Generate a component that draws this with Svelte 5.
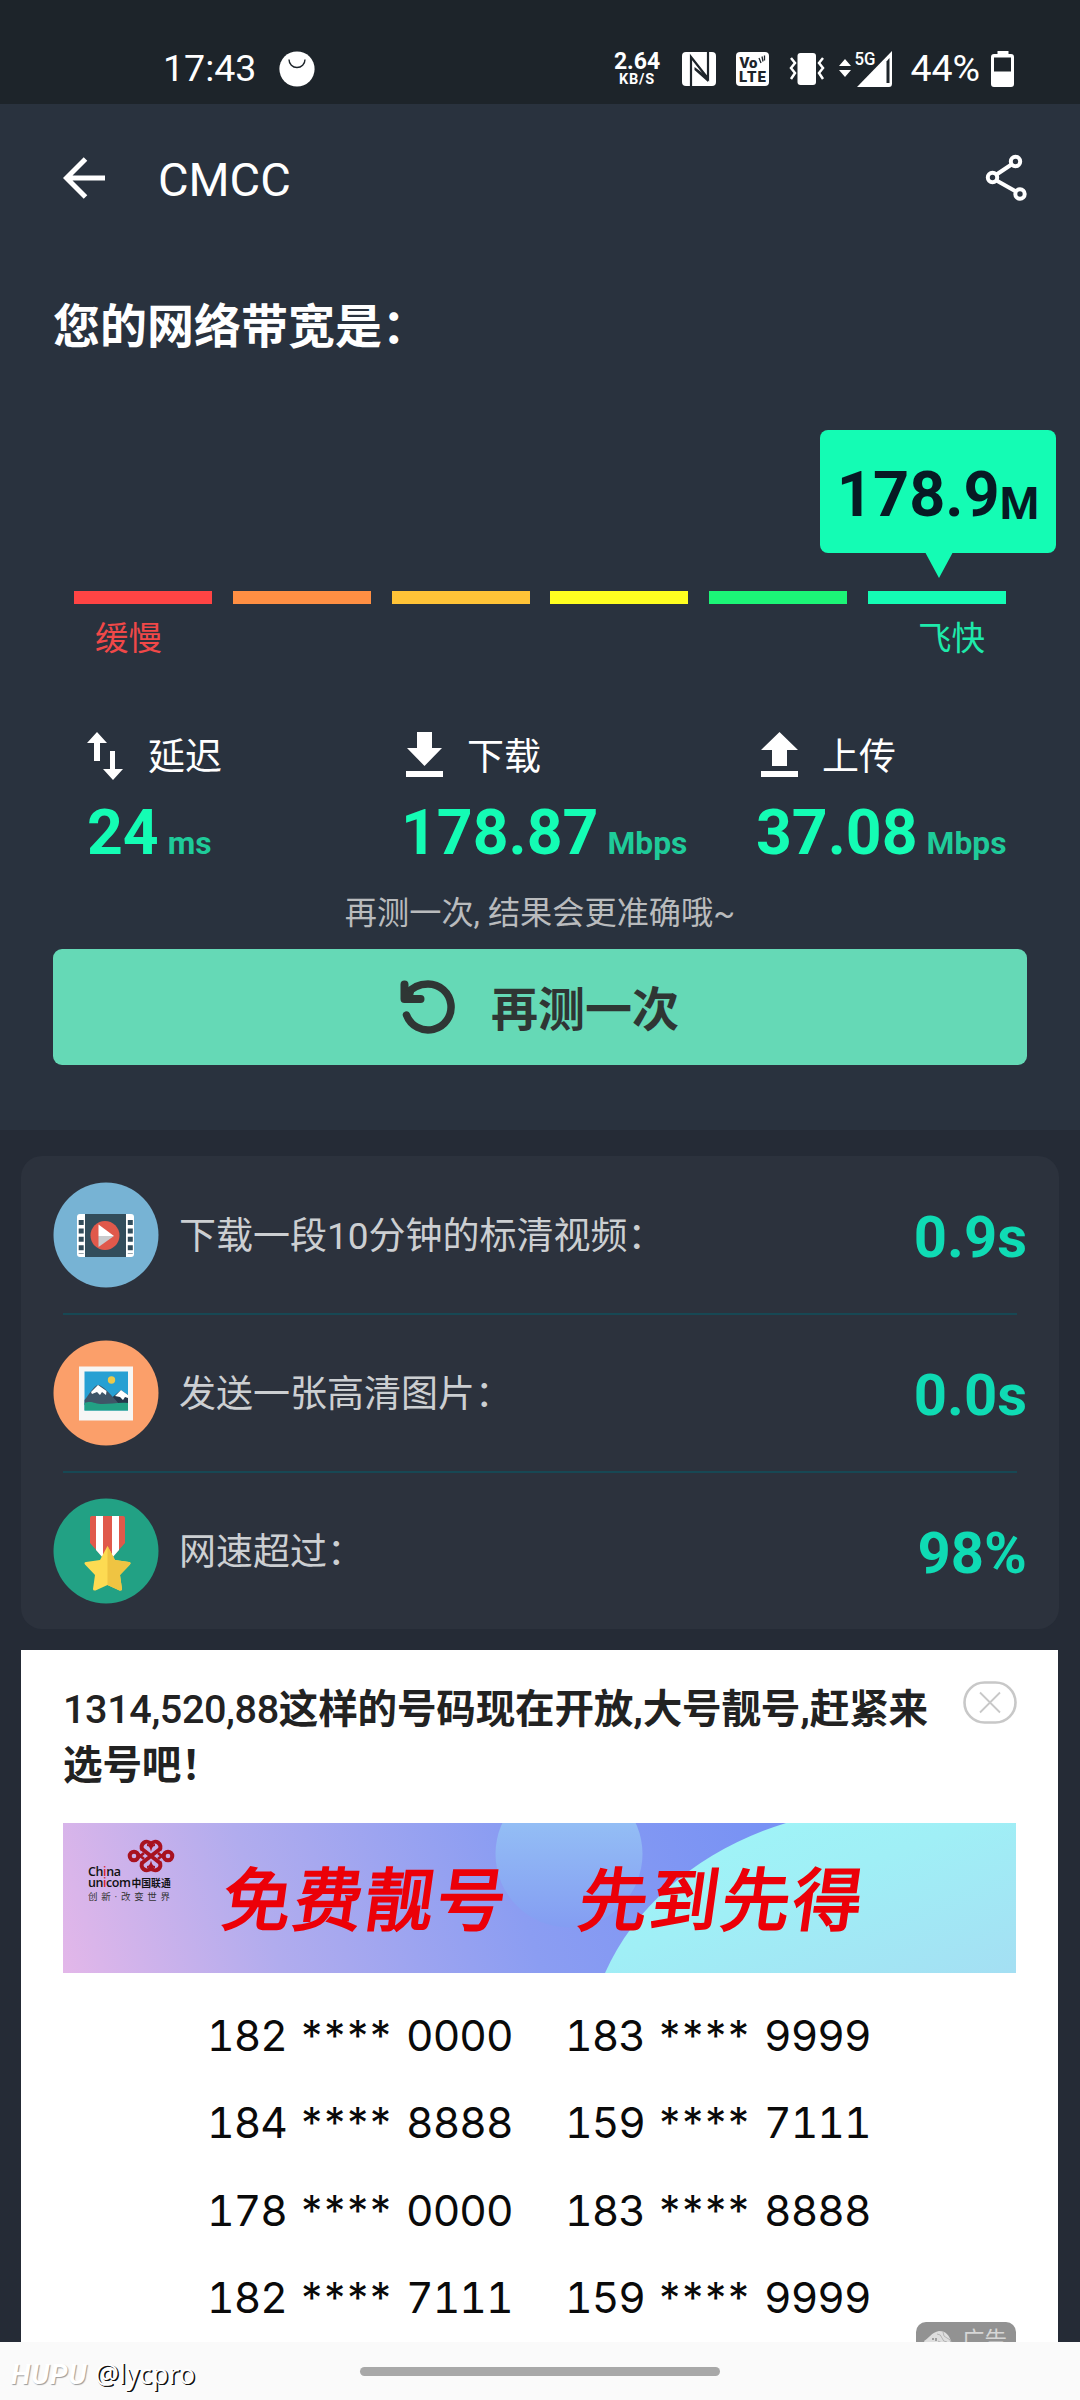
<script lang="ts">
  type Metric = { kind: 'delay' | 'down' | 'up'; label: string; value: string; unit: string }

  const levels = ['#ff4444', '#ff8f43', '#ffc337', '#ffff20', '#1cf577', '#14fcb4']

  const metrics: Metric[] = [
    { kind: 'delay', label: '延迟', value: '24', unit: 'ms' },
    { kind: 'down', label: '下载', value: '178.87', unit: 'Mbps' },
    { kind: 'up', label: '上传', value: '37.08', unit: 'Mbps' },
  ]

  const facts = [
    { icon: 'video', label: '下载一段10分钟的标清视频：', value: '0.9s' },
    { icon: 'photo', label: '发送一张高清图片：', value: '0.0s' },
    { icon: 'medal', label: '网速超过：', value: '98%' },
  ]

  const numbers = [
    ['182', '0000'], ['183', '9999'],
    ['184', '8888'], ['159', '7111'],
    ['178', '0000'], ['183', '8888'],
    ['182', '7111'], ['159', '9999'],
  ]
</script>

<div class="screen">
  <div class="status">
    <span class="clock">17:43</span>
    <svg class="app-dot" width="36" height="36" viewBox="0 0 36 36">
      <circle cx="18" cy="18" r="17.6" fill="#fff" />
      <path d="M10 8.5a8 8 0 0 0 16 0" fill="none" stroke="#1d242a" stroke-width="1.4" />
    </svg>
    <div class="rate"><b>2.64</b><small>KB/S</small></div>
    <svg class="nfc" width="34" height="34" viewBox="0 0 34 34">
      <rect width="34" height="34" rx="4" fill="#fff" />
      <path d="M9 34V5l17 21.500V0" fill="none" stroke="#1d242a" stroke-width="2.200" />
      <path d="M12.500 15v3L26 30V25" fill="#1d242a" />
    </svg>
    <svg class="volte" width="33" height="34" viewBox="0 0 33 34">
      <rect width="33" height="34" rx="4" fill="#fff" />
      <text x="3.500" y="15.500" font-size="15" textLength="18">Vo</text>
      <text x="3" y="30" font-size="17" textLength="27">LTE</text>
      <path d="m23 6 2 5M26 4.500l1 5M28.500 3.500v5" fill="none" stroke="#1d242a" stroke-width="1.300" />
    </svg>
    <svg class="vibrate" width="36" height="34" viewBox="0 0 36 34">
      <rect x="8.500" y="1" width="18.500" height="32" rx="3" fill="#fff" />
      <path d="m2 6 4 5-4 5 4 5-4 6M34 6l-4 5 4 5-4 5 4 6" fill="none" stroke="#fff" stroke-width="2.500" />
    </svg>
    <svg class="signal" width="54" height="36" viewBox="0 0 54 36">
      <path d="m0 15 6-7 6 7zM0 19h12l-6 7z" fill="#fff" />
      <path d="M53 0v32.500q0 3.500-3 3.500H18z" fill="#fff" />
      <path d="M47.500 10.500 50.500 7v25h-3z" fill="#1d242a" />
      <text x="15.500" y="14" font-size="18" textLength="21" lengthAdjust="spacingAndGlyphs">5G</text>
    </svg>
    <span class="percent">44%</span>
    <svg class="battery" width="23" height="36" viewBox="0 0 23 36">
      <path fill="#fff" d="M6.500 0h11v3H20q3 0 3 3v27q0 3-3 3H3q-3 0-3-3V6q0-3 3-3h3.500z" />
      <rect x="3" y="6.500" width="17" height="14" fill="#1d242a" />
    </svg>
  </div>

  <section class="result">
    <header class="toolbar">
      <svg width="42" height="42" viewBox="0 0 42 42">
        <path d="M22.500 2 3.500 21l19 19M3.500 21H42" fill="none" stroke="#fff" stroke-width="5" />
      </svg>
      <h1>CMCC</h1>
      <svg width="42" height="48" viewBox="0 0 42 48" fill="none" stroke="#fff" stroke-width="4">
        <circle cx="30.500" cy="7.500" r="4.700" />
        <circle cx="7.500" cy="23.500" r="4.700" />
        <circle cx="35" cy="40" r="4.700" />
        <path d="M26.500 10.500 11.500 20.500M11.500 26.500l19.500 11" />
      </svg>
    </header>

    <h2>您的网络带宽是：</h2>

    <div class="bubble"><span>178.9</span><small>M</small></div>
    <div class="levels">
      {#each levels as color}
        <i style="background: {color}"></i>
      {/each}
    </div>
    <div class="ends"><span class="slow">缓慢</span><span class="fast">飞快</span></div>

    <div class="metrics">
      {#each metrics as m}
        <div class="metric {m.kind}">
          <div class="metric-name">
            {#if m.kind === 'delay'}
              <svg width="37" height="48" viewBox="0 0 37 48" fill="#fff">
                <path d="M10 0 20 11h-7v18H7V11H0zM23 19h5v18h8L26 48 16 37h7z" />
              </svg>
            {:else if m.kind === 'down'}
              <svg width="37" height="48" viewBox="0 0 37 48" fill="#fff">
                <path d="M11 0h15v16h10L18.500 34 1 16h10zM0 39h37v6H0z" />
              </svg>
            {:else}
              <svg width="37" height="48" viewBox="0 0 37 48" fill="#fff">
                <path d="M18.500 0 37 18H26v16H11V18H0zM0 39h37v6H0z" />
              </svg>
            {/if}
            <span>{m.label}</span>
          </div>
          <div class="metric-value">{m.value}<small>{m.unit}</small></div>
        </div>
      {/each}
    </div>

    <p class="hint">再测一次, 结果会更准确哦~</p>
    <button class="again">
      <svg width="56" height="54" viewBox="0 0 56 54" fill="none" stroke="#2f3634" stroke-linecap="round">
        <path d="M7 14C13 6 20 4 28 4a23 23 0 1 1-21.500 31" stroke-width="7.500" />
        <path d="M4.500 4.500v14.500h16" stroke-width="8" stroke-linejoin="round" />
        <path d="M5 8l8 4-2 8H5z" fill="#2f3634" stroke-width="2" />
      </svg>
      <span>再测一次</span>
    </button>
  </section>

  <section class="facts">
    {#each facts as f}
      <div class="fact">
        <svg width="106" height="106" viewBox="0 0 106 106">
          {#if f.icon === 'video'}
            <circle cx="53" cy="53" r="52.500" fill="#77b3d4" />
            <rect x="24" y="32" width="57" height="43" rx="3" fill="#fff" />
            <rect x="32" y="32" width="41" height="43" fill="#324d5b" />
            <path d="M28.200 38v34M77.300 38v34" stroke="#324d5b" stroke-width="5" stroke-dasharray="5 3.400" />
            <circle cx="52" cy="53.500" r="14.500" fill="#e0594b" />
            <path d="M45.500 42.500V54H61z" fill="#fff" />
            <path d="M45.500 65V54H61z" fill="#c9cbcd" />
          {:else if f.icon === 'photo'}
            <circle cx="53" cy="53" r="52.500" fill="#fb9f6a" />
            <rect x="26" y="26.500" width="54" height="54" fill="#f6f6f5" />
            <rect x="31.500" y="31.500" width="43.500" height="39" fill="#27a0d3" />
            <circle cx="58.500" cy="40" r="3.700" fill="#ecc94b" />
            <path d="m56 60 12-10 7 5v12H60z" fill="#25374a" />
            <path d="m62 56 6-6 7 5v3l-3-1-2 3-3-3z" fill="#fff" />
            <path d="M31.500 60C36 55 41 45 45 45c4 0 12 8 21 19l-20 5-14.500-4z" fill="#3f5567" />
            <path d="m38 52 7-7 8.500 6-.5 4-4-3-2 3-3-3-5 2z" fill="#fff" />
            <path d="M31.500 63c7-3 10 1 18 1s17-2 25.500-1v7.500H31.500z" fill="#22a184" />
          {:else}
            <circle cx="53" cy="53" r="52.500" fill="#22a184" />
            <path d="M37 20q0-2 2-2h31q2 0 2 2v25L57 62h-5L37 45z" fill="#e0594b" />
            <path d="M43 18h7v42l-7-8zM59 18h7v34l-7 8z" fill="#fff" />
            <path d="m54.500 48 7.500 14 14 2q2.500.5 1 2.500L67 77l2 14q0 2-2.500 1.500L54.500 87l-12 5.500Q40 93 40 91l2-14-10-10.500Q30.500 64.500 33 64l14-2z" fill="#fddb52" />
            <path d="m54.500 48 7.500 14 14 2q2.500.5 1 2.500L67 77l2 14q0 2-2.500 1.500L54.500 87z" fill="#efc442" />
          {/if}
        </svg>
        <span class="fact-label">{f.label}</span>
        <b>{f.value}</b>
      </div>
    {/each}
  </section>

  <section class="ad">
    <div class="ad-head">
      <p><span>1314,520,88</span>这样的号码现在开放,大号靓号,赶紧来选号吧！</p>
      <svg width="54" height="44" viewBox="0 0 54 44" fill="none" stroke="#c8c8c8">
        <rect x="1.500" y="1.500" width="51" height="40" rx="20" stroke-width="2.600" />
        <path d="m17 11.500 20 20M37 11.500l-20 20" stroke-width="1.800" />
      </svg>
    </div>

    <div class="banner">
      <svg class="banner-bg" width="953" height="150" viewBox="0 0 953 150">
        <defs>
          <linearGradient id="sky" gradientUnits="userSpaceOnUse" x1="0" y1="150" x2="900" y2="-150">
            <stop offset="0" stop-color="#e3b7e9" />
            <stop offset="0.220" stop-color="#b1acee" />
            <stop offset="0.480" stop-color="#8b9df2" />
            <stop offset="0.750" stop-color="#7892f4" />
          </linearGradient>
          <linearGradient id="sea" x1="0" y1="0" x2="1" y2="1">
            <stop offset="0" stop-color="#9ff6f8" />
            <stop offset="0.450" stop-color="#a0eff6" />
            <stop offset="1" stop-color="#a4dff3" />
          </linearGradient>
          <linearGradient id="orb" x1="0" y1="0" x2="0" y2="1">
            <stop offset="0" stop-color="#93bdf5" />
            <stop offset="0.3" stop-color="#93bdf5" />
            <stop offset="1" stop-color="#849df2" />
          </linearGradient>
        </defs>
        <rect width="953" height="150" fill="url(#sky)" />
        <circle cx="506" cy="31" r="73.500" fill="url(#orb)" />
        <path d="M542 150C573 80 640 25 723 0h230v150z" fill="url(#sea)" />
      </svg>
      <svg class="unicom" width="90" height="66" viewBox="0 0 90 66">
        <g transform="translate(63 19)" fill="none" stroke="#a81220" stroke-width="4">
          <path d="M-9-7 9 7M9-7-9 7" />
          <path d="M-8.500-6a5 5 0 1 1 8.500-6 5 5 0 1 1 8.500 6M-8.500 6a5 5 0 1 0 8.500 6 5 5 0 1 0 8.500-6" />
          <path d="M-4-11q3 0 4 3 1-3 4-3M-4 11q3 0 4-3 1 3 4 3" stroke-width="2.200" />
          <circle cx="-17" cy="0" r="4.300" />
          <circle cx="17" cy="0" r="4.300" />
          <path d="m-13-2 6 5M-13 2l6-5M13-2 7 3M13 2 7-3" stroke-width="2.800" />
        </g>
        <text x="0" y="39" font-size="12.500" textLength="33">Ch<tspan fill="#d8202c">i</tspan>na</text>
        <text x="0" y="49.500" font-size="12.500" textLength="43">un<tspan fill="#d8202c">i</tspan>com</text>
        <text x="43.500" y="49.500" font-size="9.800" font-weight="700">中国联通</text>
        <text class="motto" x="0" y="62.500" font-size="9.500" textLength="82">创新·改变世界</text>
      </svg>
      <strong>免费靓号　先到先得</strong>
    </div>

    <div class="numbers">
      {#each numbers as [head, tail]}
        <div class="number"><span>{head}</span><span class="stars">****</span><span>{tail}</span></div>
      {/each}
    </div>

    <div class="tag">
      <svg width="30" height="30" viewBox="0 0 30 30">
        <path d="M1 12C5 10 9 3 16 2c8 0 11 6 13 13v15H12C10 20 3 17 1 12z" fill="#dedede" />
        <path d="M14 5q4 0 5 4t5 4M20 3q0 5 4 6t4 5M15 12q5 1 6 6" fill="none" stroke="#aaa" stroke-width="0.800" />
        <path d="M10 9v2M13 9v3" stroke="#777" stroke-width="1.200" />
      </svg>
      <span>广告</span>
    </div>
  </section>

  <footer>
    <span class="brand">HUPU</span>
    <span class="user">@lycpro</span>
    <i class="pill"></i>
  </footer>
</div>

<style>
  :global(body) { margin: 0; background: #252b36; }

  .screen {
    display: flex;
    flex-direction: column;
    width: 1080px;
    height: 2400px;
    overflow: hidden;
    background: #252b36;
    color: #fff;
    font-family: Roboto, "Noto Sans CJK SC", sans-serif;
  }
  svg { display: block; flex: none; }
  h1, h2, p { margin: 0; }

  /* status bar */
  .status {
    display: flex;
    align-items: center;
    flex: none;
    box-sizing: border-box;
    height: 104px;
    padding: 34px 66px 0 163px;
    background: #1d242a;
  }
  .clock, .percent { font-size: 37.5px; line-height: 44px; padding-bottom: 3px; }
  .clock { width: 116px; }
  .rate {
    display: flex;
    flex-direction: column;
    align-items: center;
    width: 46px;
    margin: 0 22px 0 299px;
  }
  .rate b { font-size: 23px; line-height: 21px; }
  .rate small { font-size: 14.5px; font-weight: 700; line-height: 15px; letter-spacing: 0.8px; }
  .volte { margin-left: 20px; }
  .volte text { font: 900 15px Roboto, sans-serif; fill: #1d242a; }
  .vibrate { margin-left: 20px; }
  .signal { margin-left: 14px; }
  .signal text { font-family: Roboto, sans-serif; font-weight: 500; fill: #fff; }
  .percent { margin-left: auto; }
  .battery { margin-left: 11px; }

  /* speed result */
  .result {
    flex: none;
    box-sizing: border-box;
    height: 1026px;
    padding: 0 53px;
    background: #29323e;
  }
  .toolbar { display: flex; align-items: center; height: 148px; padding-left: 10px; }
  .toolbar h1 { flex: 1; margin-left: 53px; padding-top: 4px; font-size: 47px; font-weight: 400; line-height: 60px; }
  h2 { margin-top: 45px; font-size: 47px; font-weight: 700; line-height: 60px; }

  .bubble {
    display: flex;
    align-items: baseline;
    justify-content: center;
    position: relative;
    width: 236px;
    height: 123px;
    margin: 73px -29px 0 auto;
    border-radius: 8px;
    background: #14fcb4;
    color: #071a24;
    font-weight: 700;
  }
  .bubble span { font-size: 63px; line-height: 130px; }
  .bubble small { font-size: 45px; position: relative; top: 3px; }
  .bubble::after {
    content: '';
    position: absolute;
    top: 122px;
    left: 105px;
    border: 14px solid transparent;
    border-top: 26px solid #14fcb4;
    border-bottom: 0;
  }
  .levels { display: flex; gap: 20.8px; margin: 38px 21px 0; }
  .levels i { flex: 1; height: 13px; }
  .ends { display: flex; justify-content: space-between; margin: 11px 42px 0 42px; font-size: 33.5px; line-height: 48px; }
  .slow { color: #f04848; }
  .fast { color: #1eeaab; }

  .metrics { display: flex; margin-top: 69px; padding-left: 34px; }
  .metric.delay { width: 319px; }
  .metric.down { width: 355px; }
  .metric-name { display: flex; align-items: center; gap: 24px; height: 48px; font-size: 37px; }
  .metric-name span { padding-bottom: 4px; }
  .metric-value {
    margin-top: 13px;
    margin-left: -5px;
    color: #14fcb4;
    font-size: 62.5px;
    font-weight: 700;
    line-height: 80px;
    white-space: nowrap;
  }
  .delay .metric-value { margin-left: 0; }
  .metric-value small { margin-left: 9px; font-size: 31.8px; color: #1fcb9a; }

  .hint { margin-top: 8px; text-align: center; font-size: 32.2px; line-height: 44px; color: #b9bbbd; }
  .again {
    display: flex;
    align-items: center;
    justify-content: center;
    gap: 35px;
    width: 974px;
    height: 116px;
    margin-top: 14px;
    padding: 0 1px 4px 0;
    border: 0;
    border-radius: 9px;
    background: #65d9b6;
    color: #2f3634;
    font: 700 47px Roboto, "Noto Sans CJK SC", sans-serif;
  }
  .again svg { margin-top: 3px; }

  /* what the speed means */
  .facts {
    flex: none;
    width: 1038px;
    height: 473px;
    margin: 26px auto 21px;
    border-radius: 21px;
    background: #2c323d;
  }
  .fact { display: flex; align-items: center; height: 157px; padding: 0 32px; }
  .fact + .fact {
    border-top: 1px solid transparent;
    background: linear-gradient(#174854, #174854) 42px 0 / 954px 2px no-repeat border-box;
  }
  .fact-label { flex: 1; margin-left: 20px; padding-bottom: 3px; font-size: 37px; color: #cccfd2; }
  .fact b { padding-top: 5px; font-size: 58px; color: #0fdbb4; }

  /* advert */
  .ad {
    position: relative;
    flex: none;
    box-sizing: border-box;
    width: 1037px;
    height: 692px;
    margin-left: 21px;
    padding: 31px 42px 0;
    overflow: hidden;
    background: #fff;
    color: #222;
  }
  .ad-head { display: flex; justify-content: space-between; height: 142px; }
  .ad-head p { width: 880px; padding-top: 1px; font-size: 39.6px; font-weight: 700; line-height: 56px; letter-spacing: -0.2px; }
  .ad-head p span { font-weight: 500; letter-spacing: -0.4px; }
  .ad-head svg { margin-right: -1px; }
  .banner { position: relative; width: 953px; height: 150px; }
  .banner-bg, .unicom { position: absolute; left: 0; top: 0; }
  .unicom { left: 25px; top: 14px; }
  .unicom text { font-family: "Open Sans", "Noto Sans CJK SC", sans-serif; font-weight: 600; fill: #111; }
  .unicom .motto { font-family: "Liberation Serif", "Noto Sans CJK SC", serif; font-weight: 400; fill: #333; }
  .banner strong {
    position: absolute;
    left: 160px;
    top: 24px;
    font-size: 68.5px;
    font-weight: 400;
    line-height: 110px;
    letter-spacing: 2.8px;
    white-space: nowrap;
    color: #ec0008;
    -webkit-text-stroke: 2.2px #ec0008;
    transform: skewX(-8deg);
  }

  .numbers {
    display: grid;
    grid-template-columns: 358px 302px;
    justify-content: start;
    margin: 19px 0 0 144px;
    color: #0a0a0a;
    font-family: Inter, "Liberation Sans", sans-serif;
    font-size: 42.5px;
    font-variant-numeric: tabular-nums;
    letter-spacing: -0.9px;
  }
  .number { display: flex; height: 87.4px; line-height: 87.4px; }
  .stars { width: 88px; margin: 0 20px 0 11px; letter-spacing: -4.6px; }

  .tag {
    display: flex;
    gap: 9px;
    position: absolute;
    right: 42px;
    top: 672px;
    box-sizing: border-box;
    width: 100px;
    height: 40px;
    padding: 7px 0 0 7px;
    border-radius: 10px;
    background: #929292;
    color: #d6d6d6;
    font-size: 22.5px;
    line-height: 22px;
  }

  /* navigation bar */
  footer {
    display: flex;
    align-items: center;
    position: relative;
    flex: none;
    box-sizing: border-box;
    height: 58px;
    padding: 6px 0 0 11px;
    background: #fafafa;
  }
  .brand {
    width: 84px;
    font: italic 700 28px Roboto, sans-serif;
    letter-spacing: 1px;
    color: #fff;
    text-shadow: 1px 1px 1px #999;
  }
  .user {
    font: 400 26.6px "Noto Sans", sans-serif;
    color: #fff;
    text-shadow: 1px 1px 0 #111, 1.5px 1px 0 #111;
  }
  .pill { position: absolute; left: 360px; top: 25px; width: 360px; height: 9px; border-radius: 5px; background: #a8a8a8; }
</style>
